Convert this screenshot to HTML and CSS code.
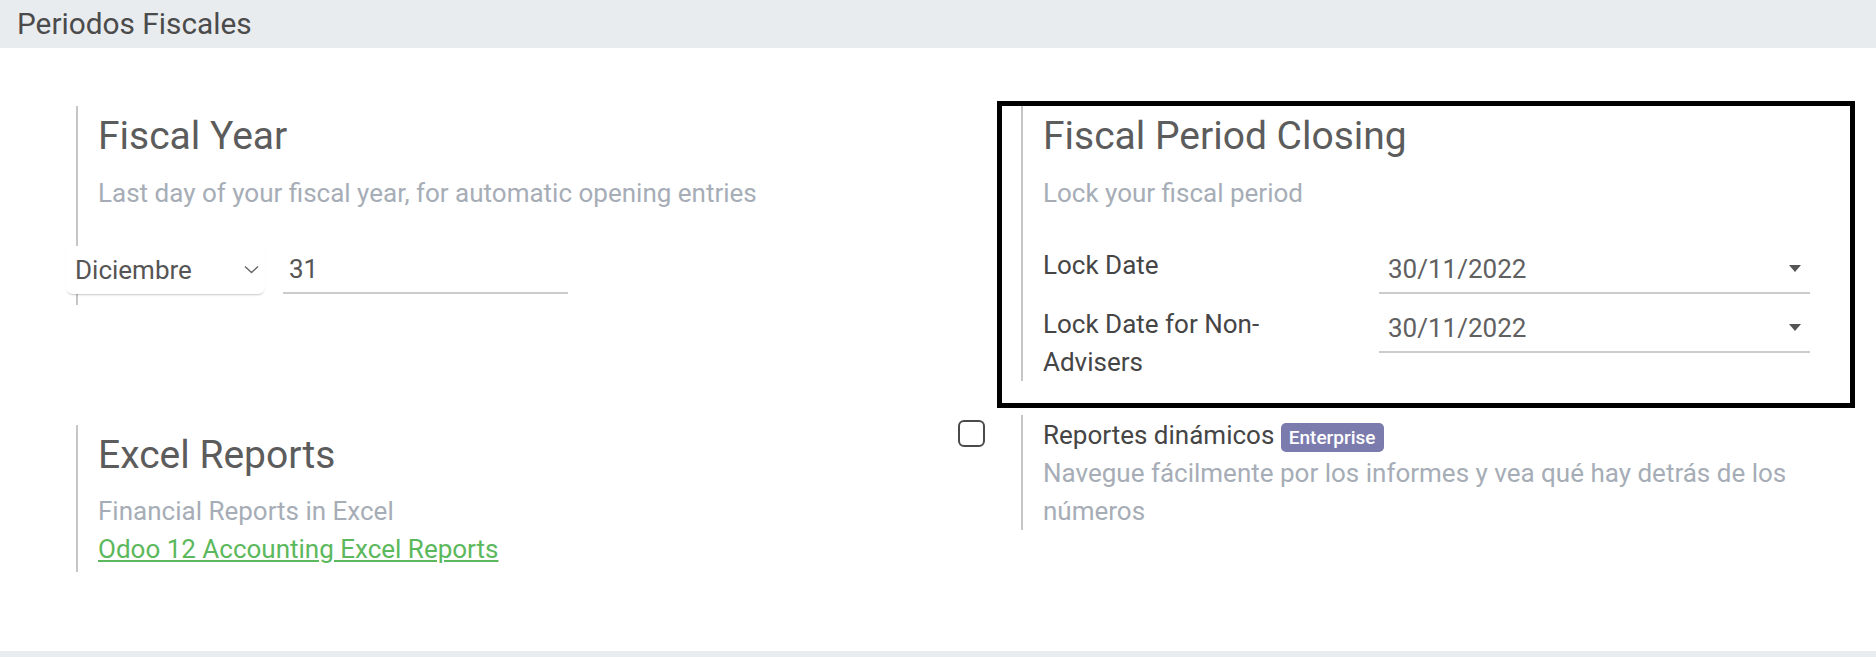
FILE: index.html
```html
<!DOCTYPE html>
<html lang="es">
<head>
<meta charset="utf-8">
<title>Periodos Fiscales</title>
<link rel="stylesheet" href="styles.css">
</head>
<body>
<div class="section-title">Periodos Fiscales</div>
<div class="settings">
  <div class="setting-box">
    <div class="left-pane"></div>
    <div class="right-pane pad-b">
      <div class="setting-heading">Fiscal Year</div>
      <div class="muted sub">Last day of your fiscal year, for automatic opening entries</div>
      <div class="fy-row">
        <div class="select">
          <span>Diciembre</span>
          <svg class="chev" width="15" height="9" viewBox="0 0 15 9"><polyline points="1,1.5 7.5,7.5 14,1.5" fill="none" stroke="#666" stroke-width="1.4"/></svg>
        </div>
        <div class="text-input">31</div>
      </div>
    </div>
  </div>

  <div class="setting-box">
    <div class="left-pane"></div>
    <div class="right-pane">
      <div class="setting-heading">Fiscal Period Closing</div>
      <div class="muted sub">Lock your fiscal period</div>
      <div class="lock-grid">
        <div class="label">Lock Date</div>
        <div class="date-input"><span>30/11/2022</span><span class="caret"></span></div>
        <div class="label">Lock Date for Non-Advisers</div>
        <div class="date-input"><span>30/11/2022</span><span class="caret"></span></div>
      </div>
    </div>
    <div class="highlight"></div>
  </div>

  <div class="setting-box excel">
    <div class="left-pane"></div>
    <div class="right-pane pad-b-small">
      <div class="setting-heading">Excel Reports</div>
      <div class="muted sub2">Financial Reports in Excel</div>
      <a class="link" href="#">Odoo 12 Accounting Excel Reports</a>
    </div>
  </div>

  <div class="setting-box">
    <div class="left-pane check-pane"><span class="checkbox"></span></div>
    <div class="right-pane pad-t">
      <div class="label">Reportes dinámicos <span class="badge">Enterprise</span></div>
      <div class="muted">Navegue fácilmente por los informes y vea qué hay detrás de los números</div>
    </div>
  </div>
</div>
<div class="section-title next"></div>
</body>
</html>
```

FILE: styles.css
```css
html, body {
  margin: 0;
  padding: 0;
  background: #ffffff;
}

body {
  font-family: Roboto, "Liberation Sans", sans-serif;
  font-size: 26px;
  line-height: 38px;
  color: #4a4a4a;
  overflow: hidden;
}

.section-title {
  height: 48px;
  line-height: 48px;
  padding-left: 17px;
  background: #e9ecef;
  color: #4b4b4b;
  font-size: 29.8px;
}

.section-title.next {
  height: 7px;
}

.settings {
  display: grid;
  grid-template-columns: 945px 1fr;
  align-items: start;
  row-gap: 34px;
  padding: 58px 0 79px 0;
}

.setting-box {
  position: relative;
  display: flex;
}

.setting-box.excel {
  margin-top: 10px;
}

.left-pane {
  flex: none;
  width: 76px;
}

.check-pane {
  box-sizing: border-box;
  padding-left: 13px;
  padding-top: 5px;
}

.checkbox {
  display: block;
  width: 27px;
  height: 27px;
  box-sizing: border-box;
  border: 2px solid #4a4a4a;
  border-radius: 6px;
}

.right-pane {
  flex: 1;
  min-width: 0;
  border-left: 2px solid #c6c6c6;
  padding-left: 20px;
}

.pad-b {
  padding-bottom: 11px;
}

.pad-b-small {
  padding-bottom: 4px;
}

.pad-t {
  padding-top: 1px;
}

.setting-heading {
  margin-top: 7px;
  font-size: 39px;
  line-height: 1.2;
  color: #5c5c5c;
}

.muted {
  color: #a6adb6;
}

.sub {
  margin-top: 14px;
}

.sub2 {
  margin-top: 13px;
}

.fy-row {
  display: flex;
  margin-top: 34px;
  margin-left: -32px;
}

.select {
  position: relative;
  box-sizing: border-box;
  width: 199px;
  height: 48px;
  padding: 4px 6px 4px 9px;
  display: flex;
  align-items: center;
  justify-content: space-between;
  background: #fff;
  color: #555555;
  border-radius: 0 0 7px 7px;
  box-shadow: 0 2px 2px -1px rgba(0, 0, 0, 0.22);
}

.chev {
  display: block;
}

.text-input {
  margin-left: 18px;
  width: 285px;
  padding: 4px 6px;
  box-sizing: border-box;
  border-bottom: 2px solid #cccccc;
  color: #555555;
  height: 48px;
}

.lock-grid {
  display: grid;
  grid-template-columns: 336px 431px;
  row-gap: 11px;
  margin-top: 34px;
  align-items: start;
}

.label {
  color: #454545;
}

.lock-grid .label {
  padding-right: 40px;
}

.date-input {
  display: flex;
  align-items: center;
  justify-content: space-between;
  padding: 4px 9px 4px 9px;
  border-bottom: 2px solid #cccccc;
  color: #606060;
}

.caret {
  width: 0;
  height: 0;
  border-left: 6.5px solid transparent;
  border-right: 6.5px solid transparent;
  border-top: 7px solid #555555;
}

.highlight {
  position: absolute;
  left: 52px;
  top: -5px;
  width: 858px;
  height: 307px;
  box-sizing: border-box;
  border: 5px solid #000000;
  pointer-events: none;
}

.link {
  display: block;
  color: #5cb85c;
  text-decoration: underline;
  width: max-content;
}

.badge {
  display: inline-block;
  font-size: 19px;
  line-height: 22px;
  padding: 3.5px 8px;
  border-radius: 5px;
  background: #7c7bad;
  color: #ffffff;
  font-weight: 500;
}
```
